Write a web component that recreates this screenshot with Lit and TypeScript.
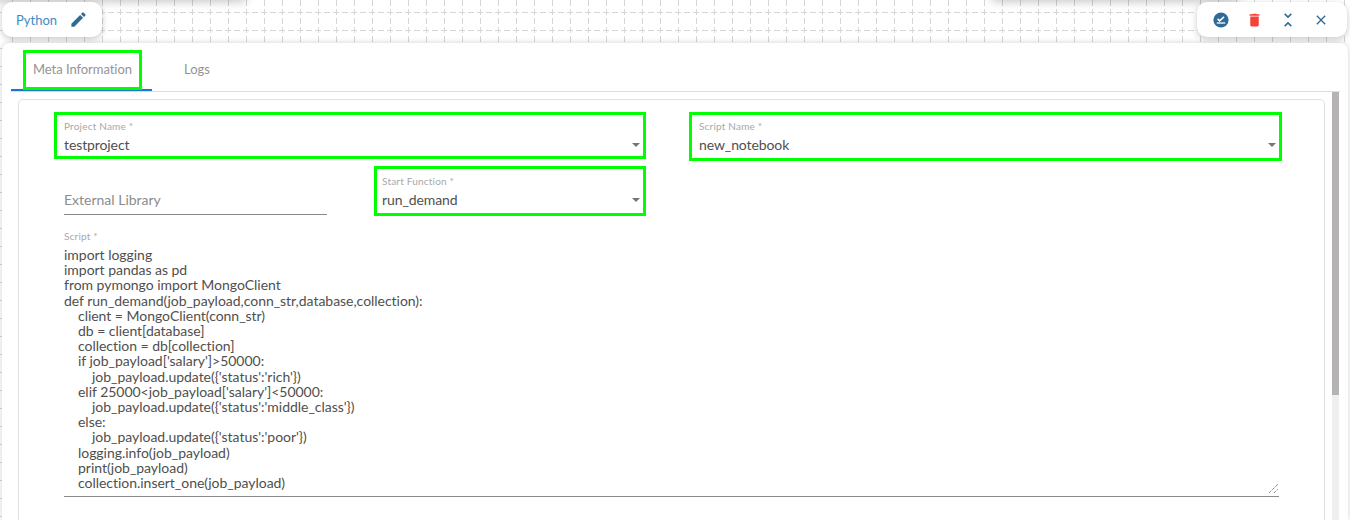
import { LitElement, html, css } from "lit";
import { customElement } from "lit/decorators.js";

const LINES: [number, string][] = [
  [0, "import logging"],
  [0, "import pandas as pd"],
  [0, "from pymongo import MongoClient"],
  [0, "def run_demand(job_payload,conn_str,database,collection):"],
  [1, "client = MongoClient(conn_str)"],
  [1, "db = client[database]"],
  [1, "collection = db[collection]"],
  [1, "if job_payload['salary']>50000:"],
  [2, "job_payload.update({'status':'rich'})"],
  [1, "elif 25000<job_payload['salary']<50000:"],
  [2, "job_payload.update({'status':'middle_class'})"],
  [1, "else:"],
  [2, "job_payload.update({'status':'poor'})"],
  [1, "logging.info(job_payload)"],
  [1, "print(job_payload)"],
  [1, "collection.insert_one(job_payload)"],
];

@customElement("app-root")
export class AppRoot extends LitElement {
  static styles = css`
    :host {
      display: block;
      width: 1350px;
      height: 520px;
      overflow: hidden;
      position: relative;
      font-family: "Lato", "Noto Sans", sans-serif;
      color: #4a4a4a;
      background: #fff;
    }
    .canvas {
      position: absolute;
      inset: 0;
      background-color: #fff;
      overflow: hidden;
    }
    .canvas svg { display: block; }
    .ghost {
      position: absolute;
      top: -40px;
      height: 40px;
      background: #fff;
      box-shadow: 0 2px 10px rgba(0, 0, 0, 0.22);
      border-radius: 8px;
    }
    .ghost.a { left: -10px; width: 258px; }
    .ghost.b { left: 990px; width: 250px; }
    .wrap {
      position: relative;
      display: flex;
      flex-direction: column;
      height: 520px;
      padding: 2px 2px 0;
      box-sizing: border-box;
    }
    .head {
      display: flex;
      justify-content: space-between;
      height: 35px;
      margin-bottom: 6px;
      flex: none;
    }
    .pill {
      background: #fff;
      border-radius: 10px;
      box-shadow: 0 2px 6px rgba(0, 0, 0, 0.22);
      display: flex;
      align-items: center;
    }
    .pill.left { width: 100px; padding-left: 14px; box-sizing: border-box; }
    .pill.right { width: 150px; margin-right: 1px; box-sizing: border-box; }
    .title {
      color: #3d8cc9;
      font-size: 13px;
      width: 53px;
    }
    .pen { width: 19px; height: 19px; fill: #2f6b97; display: block; }
    .ic { display: flex; align-items: center; justify-content: center; flex: none; }
    .ic svg { display: block; }
    .ic.check { width: 49px; }
    .ic.check svg { margin-left: -1px; }
    .ic.trash { width: 17px; }
    .ic.fold { width: 50px; }
    .ic.close { width: 16px; }
    .panel {
      flex: 1;
      min-height: 0;
      background: #fff;
      border-radius: 8px 8px 0 0;
      box-shadow: 0 0 6px rgba(0, 0, 0, 0.18);
      overflow: hidden;
      display: flex;
      flex-direction: column;
    }
    .tabs {
      display: flex;
      flex: none;
      height: 49px;
      margin: 0 8px 0 9px;
      border-bottom: 1px solid #dedede;
      box-sizing: border-box;
    }
    .tab {
      height: 48px;
      box-sizing: border-box;
      font-size: 13px;
      color: #949494;
      display: flex;
      align-items: center;
    }
    .tab.active {
      width: 141px;
      padding: 7px 10px 0 12px;
      align-items: flex-start;
      border-bottom: 2px solid #1976d2;
    }
    .tabbox {
      width: 119px;
      height: 40px;
      box-sizing: border-box;
      border: 3px solid #00ff00;
      padding-bottom: 2px;
      letter-spacing: -0.05px;
      display: flex;
      align-items: center;
      justify-content: center;
    }
    .tab.logs { padding-left: 32px; padding-top: 4px; }
    .scroll {
      flex: 1;
      min-height: 0;
      display: flex;
      padding-left: 16px;
    }
    .card {
      flex: none;
      width: 1307px;
      margin-top: 7px;
      border: 1px solid #e0e0e0;
      border-radius: 5px;
      box-sizing: border-box;
      padding: 12px 0 0 35px;
      height: 460px;
    }
    .bar {
      flex: none;
      width: 7px;
      margin-left: 7px;
      background: #efefef;
      display: flex;
    }
    .thumb { width: 7px; height: 303px; background: #b5b3b3; }
    .row1 { display: flex; gap: 43px; height: 54px; }
    .box {
      border: 3px solid #00ff00;
      box-sizing: border-box;
      padding: 5px 7px 0;
      position: relative;
    }
    .box.p { width: 592px; height: 47px; }
    .box.s { width: 593px; height: 49px; }
    .box.f { width: 272px; height: 50px; padding: 6px 5px 0; }
    .lab { font-size: 10px; color: #a8a8a8; line-height: 12px; letter-spacing: 0.2px; }
    .val { font-size: 14px; color: #4f4f4f; line-height: 18px; margin-top: 4px; letter-spacing: -0.1px; }
    .arrow {
      position: absolute;
      right: 3px;
      bottom: 9px;
      width: 0;
      height: 0;
      border-left: 4px solid transparent;
      border-right: 4px solid transparent;
      border-top: 4px solid #757575;
    }
    .box.s .arrow { bottom: 11px; }
    .box.f .arrow { bottom: 11px; }
    .row2 { display: flex; height: 62px; }
    .ext {
      margin: 0 47px 0 10px;
      width: 263px;
      height: 49px;
      box-sizing: border-box;
      border-bottom: 1px solid #8a8a8a;
      font-size: 14px;
      color: #8c8c8c;
      padding-top: 25px;
      line-height: 18px;
    }
    .script {
      margin-left: 10px;
      width: 1215px;
      height: 269px;
      padding-top: 2px;
      box-sizing: border-box;
      border-bottom: 1px solid #8a8a8a;
      position: relative;
    }
    .code { margin-top: 5px; font-size: 14px; line-height: 15.2px; color: #4f4f4f; letter-spacing: -0.03px; }
    .line { white-space: pre; }
    .grip { position: absolute; right: 1px; bottom: 3px; display: block; }
  `;

  render() {
    return html`
      <div class="canvas">
        <svg width="1350" height="520" xmlns="http://www.w3.org/2000/svg">
          <defs>
            <pattern id="g" x="0" y="0" width="18" height="18" patternUnits="userSpaceOnUse">
              <path d="M0 12.5h6M9 12.5h6" stroke="#d6d6d6" fill="none" />
              <path d="M12.5 0v6M12.5 9v6" stroke="#d6d6d6" fill="none" />
            </pattern>
          </defs>
          <rect width="1350" height="520" fill="url(#g)" />
        </svg>
        <div class="ghost a"></div>
        <div class="ghost b"></div>
      </div>
      <div class="wrap">
        <div class="head">
          <div class="pill left">
            <span class="title">Python</span>
            <svg class="pen" viewBox="0 0 24 24"><path d="M3 17.25V21h3.75L17.81 9.94l-3.75-3.75L3 17.25zM20.71 7.04a1 1 0 0 0 0-1.41l-2.34-2.34a1 1 0 0 0-1.41 0l-1.83 1.83 3.75 3.75 1.83-1.83z"/></svg>
          </div>
          <div class="pill right">
            <span class="ic check">
              <svg width="16" height="16" viewBox="0 0 16 16">
                <circle cx="8" cy="8" r="7.6" fill="#2f6b97"/>
                <path d="M4.6 6.9l2 2 4.4-4" stroke="#fff" stroke-width="1.6" fill="none"/>
                <path d="M3.8 11h8.4" stroke="#fff" stroke-width="1.3"/>
              </svg>
            </span>
            <span class="ic trash">
              <svg width="20" height="20" viewBox="0 0 24 24" fill="#f44336"><path d="M6 19c0 1.1.9 2 2 2h8c1.1 0 2-.9 2-2V7H6v12zM19 4h-3.5l-1-1h-5l-1 1H5v2h14V4z"/></svg>
            </span>
            <span class="ic fold">
              <svg width="20" height="20" viewBox="0 0 24 24" fill="#2f6b97"><path d="M7.41 18.59L8.83 20 12 16.83 15.17 20l1.41-1.41L12 14l-4.59 4.59zm9.18-13.18L15.17 4 12 7.17 8.83 4 7.41 5.41 12 10l4.59-4.59z"/></svg>
            </span>
            <span class="ic close">
              <svg width="20" height="20" viewBox="0 0 24 24" fill="#2f6b97"><path d="M19 6.41L17.59 5 12 10.59 6.41 5 5 6.41 10.59 12 5 17.59 6.41 19 12 13.41 17.59 19 19 17.59 13.41 12z"/></svg>
            </span>
          </div>
        </div>
        <div class="panel">
          <div class="tabs">
            <div class="tab active"><div class="tabbox">Meta Information</div></div>
            <div class="tab logs">Logs</div>
          </div>
          <div class="scroll">
            <div class="card">
              <div class="row1">
                <div class="box p">
                  <div class="lab">Project Name *</div>
                  <div class="val">testproject</div>
                  <span class="arrow"></span>
                </div>
                <div class="box s">
                  <div class="lab">Script Name *</div>
                  <div class="val">new_notebook</div>
                  <span class="arrow"></span>
                </div>
              </div>
              <div class="row2">
                <div class="ext">External Library</div>
                <div class="box f">
                  <div class="lab">Start Function *</div>
                  <div class="val">run_demand</div>
                  <span class="arrow"></span>
                </div>
              </div>
              <div class="script">
                <div class="lab">Script *</div>
                <div class="code">
                  ${LINES.map(
                    ([n, t]) => html`<div class="line" style="padding-left:${n * 14}px">${t}</div>`
                  )}
                </div>
                <svg class="grip" width="9" height="9" viewBox="0 0 9 9">
                  <path d="M0 9L9 0M5 9L9 5" stroke="#555" stroke-width="1" stroke-dasharray="1 1" fill="none"/>
                </svg>
              </div>
            </div>
            <div class="bar"><div class="thumb"></div></div>
          </div>
        </div>
      </div>
    `;
  }
}
